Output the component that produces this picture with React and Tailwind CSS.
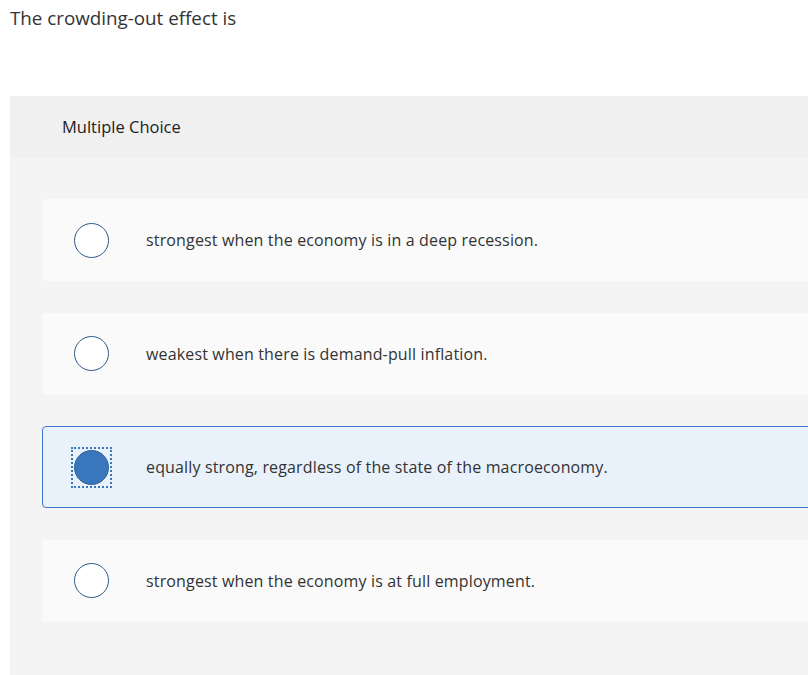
import React, { useState } from "react";

const choices = [
  "strongest when the economy is in a deep recession.",
  "weakest when there is demand-pull inflation.",
  "equally strong, regardless of the state of the macroeconomy.",
  "strongest when the economy is at full employment.",
];

const App = () => {
  const [selected, setSelected] = useState(2);

  return (
    <div
      className="w-[808px] h-[675px] overflow-hidden bg-white text-[#333]"
      style={{ fontFamily: "'Open Sans', sans-serif" }}
    >
      <p className="pl-[10px] pt-[6px] text-[18.8px] leading-[24px] text-[#333]">The crowding-out effect is</p>

      <div className="mt-[66px] ml-[10px] w-[870px] bg-[#f4f4f4] rounded-tl-[3px]">
        <div className="h-[62px] bg-[#f0f0f0] flex items-center pl-[52px] text-[16.5px] text-[#222]">
          Multiple Choice
        </div>
        <div className="flex flex-col gap-[31.5px] px-[32px] pt-[41px] pb-[60px]">
          {choices.map((text, i) => {
            const isSel = i === selected;
            return (
              <div
                key={i}
                onClick={() => setSelected(i)}
                className={`h-[82px] flex items-center rounded-[4px] cursor-pointer ${
                  isSel ? "bg-[#e9f1fb] border border-[#3b78c4]" : "bg-[#fafafa] border border-transparent"
                }`}
              >
                <div className="ml-[27px] w-[42px] h-[42px] grid place-items-center">
                  {isSel ? (
                    <div className="w-[41px] h-[41px] grid place-items-center border-2 border-dotted border-[#3a76bb]">
                      <div className="w-[35px] h-[35px] rounded-full bg-[#3a76bb] border border-[#2f609a]"></div>
                    </div>
                  ) : (
                    <div className="w-[35px] h-[35px] rounded-full bg-white border-[1.5px] border-[#2d5a8a]"></div>
                  )}
                </div>
                <p className="ml-[34px] text-[16px] tracking-[0.15px] text-[#333]">{text}</p>
              </div>
            );
          })}
        </div>
      </div>
    </div>
  );
};

export default App;
